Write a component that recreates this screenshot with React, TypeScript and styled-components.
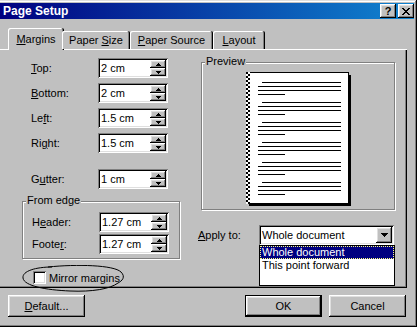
import styled, { createGlobalStyle, css } from "styled-components";

const GlobalStyle = createGlobalStyle`
  html, body {
    margin: 0;
    padding: 0;
    background: #ffffff;
  }
  body {
    font-family: "Liberation Sans", Arial, sans-serif;
    font-size: 11px;
    color: #000;
  }
`;

const raised = css`
  box-shadow: inset -1px -1px #000, inset 1px 1px #fff, inset -2px -2px #808080,
    inset 2px 2px #dfdfdf;
`;

const sunken = css`
  box-shadow: inset 1px 1px #808080, inset -1px -1px #fff, inset 2px 2px #000,
    inset -2px -2px #dfdfdf;
`;

function Arrow({ down }: { down?: boolean }) {
  return (
    <svg width="5" height="3" shapeRendering="crispEdges">
      <g transform={down ? "translate(0 3) scale(1 -1)" : undefined}>
        <rect x="2" y="0" width="1" height="1" fill="#000" />
        <rect x="1" y="1" width="3" height="1" fill="#000" />
        <rect x="0" y="2" width="5" height="1" fill="#000" />
      </g>
    </svg>
  );
}

function Spinner({ value }: { value: string }) {
  return (
    <SpinBox>
      <SpinText>{value}</SpinText>
      <SpinButtons>
        <SpinButton>
          <Arrow />
        </SpinButton>
        <SpinButton>
          <Arrow down />
        </SpinButton>
      </SpinButtons>
    </SpinBox>
  );
}

function PagePreview() {
  const groups = [0, 1, 2, 3, 4, 5];
  return (
    <svg width="105" height="134" shapeRendering="crispEdges">
      <defs>
        <pattern id="chk" width="4" height="4" patternUnits="userSpaceOnUse">
          <rect width="4" height="4" fill="#fff" />
          <rect width="2" height="2" fill="#000" />
          <rect x="2" y="2" width="2" height="2" fill="#000" />
        </pattern>
      </defs>
      <rect x="3" y="3" width="102" height="131" fill="#000" />
      <rect x="0" y="0" width="103" height="132" fill="#000" />
      <rect x="1" y="1" width="101" height="130" fill="#fff" />
      <rect x="0" y="0" width="4" height="132" fill="url(#chk)" />
      {groups.map((g) => {
        const y = 10 + g * 20;
        return (
          <g key={g} fill="#000">
            <rect x="16" y={y} width="79" height="1" />
            <rect x="12" y={y + 4} width="83" height="1" />
            <rect x="12" y={y + 8} width="83" height="1" />
            <rect x="12" y={y + 12} width="27" height="1" />
          </g>
        );
      })}
    </svg>
  );
}

function Ellipse() {
  return (
    <EllipseSvg width="104" height="28" viewBox="0 0 104 28">
      <path
        d="M26 2 C 55 -1, 92 0, 99 7 C 104 12, 100 16, 96 18 C 88 24, 70 27, 48 26 C 24 25, 2 21, 1 13 C 0 6, 14 2, 30 2"
        fill="none"
        stroke="#000"
        strokeWidth="1"
      />
    </EllipseSvg>
  );
}

export default function App() {
  return (
    <>
      <GlobalStyle />
      <Window>
        <TitleBar>
          <Title>Page Setup</Title>
          <CaptionButtons>
            <CaptionButton>
              <HelpGlyph>?</HelpGlyph>
            </CaptionButton>
            <CaptionButton>
              <svg width="8" height="7" shapeRendering="crispEdges">
                <path
                  d="M0 0h2v1h-2zM6 0h2v1h-2zM1 1h2v1h-2zM5 1h2v1h-2zM2 2h4v1h-4zM3 3h2v1h-2zM2 4h4v1h-4zM1 5h2v1h-2zM5 5h2v1h-2zM0 6h2v1h-2zM6 6h2v1h-2z"
                  fill="#000"
                />
              </svg>
            </CaptionButton>
          </CaptionButtons>
        </TitleBar>

        <TabRow>
          <Tab $w={56} $active>
            <Key>M</Key>argins
          </Tab>
          <Tab $w={68}>
            Paper <Key>S</Key>ize
          </Tab>
          <Tab $w={83}>
            <Key>P</Key>aper Source
          </Tab>
          <Tab $w={52}>
            <Key>L</Key>ayout
          </Tab>
        </TabRow>

        <Panel>
          <LeftColumn>
            <FieldList>
              <FieldRow>
                <FieldLabel>
                  <Key>T</Key>op:
                </FieldLabel>
                <Spinner value="2 cm" />
              </FieldRow>
              <FieldRow>
                <FieldLabel>
                  <Key>B</Key>ottom:
                </FieldLabel>
                <Spinner value="2 cm" />
              </FieldRow>
              <FieldRow>
                <FieldLabel>
                  Le<Key>f</Key>t:
                </FieldLabel>
                <Spinner value="1.5 cm" />
              </FieldRow>
              <FieldRow>
                <FieldLabel>
                  Ri<Key>g</Key>ht:
                </FieldLabel>
                <Spinner value="1.5 cm" />
              </FieldRow>
              <FieldRow $gapTop={11}>
                <FieldLabel>
                  G<Key>u</Key>tter:
                </FieldLabel>
                <Spinner value="1 cm" />
              </FieldRow>
            </FieldList>

            <EdgeGroup>
              <GroupLabel>From edge</GroupLabel>
              <FieldRow>
                <FieldLabel>
                  H<Key>e</Key>ader:
                </FieldLabel>
                <Spinner value="1.27 cm" />
              </FieldRow>
              <FieldRow $gapTop={2}>
                <FieldLabel>
                  Foote<Key>r</Key>:
                </FieldLabel>
                <Spinner value="1.27 cm" />
              </FieldRow>
            </EdgeGroup>

            <MirrorRow>
              <Ellipse />
              <CheckBox />
              <span>Mirror margins</span>
            </MirrorRow>
          </LeftColumn>

          <RightColumn>
            <PreviewGroup>
              <GroupLabel>Preview</GroupLabel>
              <PagePreview />
            </PreviewGroup>

            <ApplyRow>
              <ApplyLabel>
                <Key>A</Key>pply to:
              </ApplyLabel>
              <Combo>
                <ComboText>Whole document</ComboText>
                <DropButton>
                  <svg width="7" height="4" shapeRendering="crispEdges">
                    <path d="M0 0h7v1h-7zM1 1h5v1h-5zM2 2h3v1h-3zM3 3h1v1h-1z" fill="#000" />
                  </svg>
                </DropButton>
                <DropList>
                  <ListItem $selected>Whole document</ListItem>
                  <ListItem>This point forward</ListItem>
                </DropList>
              </Combo>
            </ApplyRow>
          </RightColumn>
        </Panel>

        <Footer>
          <Button>
            <Key>D</Key>efault...
          </Button>
          <FooterRight>
            <Button $default>OK</Button>
            <Button>Cancel</Button>
          </FooterRight>
        </Footer>
      </Window>
    </>
  );
}

const Window = styled.div`
  width: 417px;
  height: 327px;
  box-sizing: border-box;
  padding: 3px 3px 3px 0;
  background: #c0c0c0;
  box-shadow: inset -1px -1px #000, inset 0 1px #dfdfdf, inset -2px -2px #808080,
    inset 0 2px #fff;
  display: flex;
  flex-direction: column;
  overflow: hidden;
`;

const TitleBar = styled.div`
  height: 16px;
  display: flex;
  align-items: center;
  justify-content: space-between;
  padding-left: 3px;
  background: linear-gradient(to right, #000080, #1084d0);
`;

const Title = styled.span`
  color: #fff;
  font-weight: bold;
  font-size: 12px;
  line-height: 16px;
`;

const CaptionButtons = styled.div`
  display: flex;
  gap: 2px;
`;

const CaptionButton = styled.div`
  width: 16px;
  height: 14px;
  box-sizing: border-box;
  background: #c0c0c0;
  ${raised};
  display: flex;
  align-items: center;
  justify-content: center;
`;

const HelpGlyph = styled.span`
  font-weight: bold;
  font-size: 11px;
  line-height: 11px;
`;

const Key = styled.span`
  text-decoration: underline;
`;

const TabRow = styled.div`
  position: relative;
  z-index: 1;
  height: 21px;
  margin-top: 9px;
  padding-left: 10px;
  display: flex;
  align-items: flex-end;
`;

const Tab = styled.div<{ $w: number; $active?: boolean }>`
  width: ${(p) => p.$w}px;
  height: ${(p) => (p.$active ? 22 : 18)}px;
  margin: 0 ${(p) => (p.$active ? -2 : 0)}px ${(p) => (p.$active ? -1 : 0)}px;
  box-sizing: border-box;
  padding-top: ${(p) => (p.$active ? 5 : 3)}px;
  line-height: 13px;
  text-align: center;
  white-space: nowrap;
  background: #c0c0c0;
  border-radius: 2px 2px 0 0;
  box-shadow: inset -1px 0 #000, inset 1px 1px #fff, inset -2px 0 #808080;
`;

const Panel = styled.div`
  position: relative;
  width: 407px;
  height: 239px;
  box-sizing: border-box;
  padding-left: 22px;
  display: grid;
  grid-template-columns: 158px 197px;
  column-gap: 18px;
  box-shadow: inset 0 1px #fff, inset -1px -1px #000, inset -2px -2px #808080;
`;

const LeftColumn = styled.div`
  padding-top: 9px;
  display: flex;
  flex-direction: column;
`;

const FieldList = styled.div`
  display: flex;
  flex-direction: column;
  gap: 5px;
`;

const FieldRow = styled.div<{ $gapTop?: number }>`
  display: flex;
  align-items: center;
  height: 20px;
  padding-left: 9px;
  margin-top: ${(p) => p.$gapTop ?? 0}px;
`;

const FieldLabel = styled.span`
  width: 67px;
  white-space: nowrap;
`;

const SpinBox = styled.div`
  width: 70px;
  height: 20px;
  box-sizing: border-box;
  padding: 2px;
  background: #fff;
  ${sunken};
  display: flex;
`;

const SpinText = styled.span`
  flex: 1;
  padding-left: 1px;
  line-height: 16px;
`;

const SpinButtons = styled.div`
  width: 16px;
  display: flex;
  flex-direction: column;
`;

const SpinButton = styled.div`
  flex: 1;
  background: #c0c0c0;
  ${raised};
  display: flex;
  align-items: center;
  justify-content: center;
`;

const groupFrame = css`
  position: relative;
  box-sizing: border-box;
  border: 1px solid #808080;
  box-shadow: inset 1px 1px #fff, 1px 1px #fff;
`;

const GroupLabel = styled.span`
  position: absolute;
  top: -8px;
  left: 3px;
  padding: 0 1px;
  line-height: 13px;
  background: #c0c0c0;
`;

const EdgeGroup = styled.div`
  ${groupFrame};
  margin-top: 12px;
  width: 158px;
  padding: 10px 0 4px;
  display: flex;
  flex-direction: column;
`;

const MirrorRow = styled.div`
  position: relative;
  margin-top: 12px;
  padding-left: 11px;
  height: 13px;
  display: flex;
  align-items: center;
  gap: 3px;
`;

const EllipseSvg = styled.svg`
  position: absolute;
  left: 0;
  top: -6px;
`;

const CheckBox = styled.div`
  width: 13px;
  height: 13px;
  box-sizing: border-box;
  background: #fff;
  ${sunken};
`;

const RightColumn = styled.div`
  padding-top: 13px;
  display: flex;
  flex-direction: column;
`;

const PreviewGroup = styled.div`
  ${groupFrame};
  margin-left: 3px;
  width: 194px;
  height: 148px;
  padding-top: 9px;
  display: flex;
  justify-content: center;
  align-items: flex-start;
`;

const ApplyRow = styled.div`
  margin-top: 15px;
  display: flex;
  align-items: center;
`;

const ApplyLabel = styled.span`
  width: 61px;
`;

const Combo = styled.div`
  position: relative;
  width: 135px;
  height: 20px;
  box-sizing: border-box;
  padding: 2px;
  background: #fff;
  ${sunken};
  display: flex;
`;

const ComboText = styled.span`
  flex: 1;
  padding-left: 1px;
  line-height: 16px;
`;

const DropButton = styled.div`
  width: 16px;
  background: #c0c0c0;
  ${raised};
  display: flex;
  align-items: center;
  justify-content: center;
`;

const DropList = styled.div`
  position: absolute;
  top: 20px;
  left: 0;
  width: 136px;
  height: 41px;
  box-sizing: border-box;
  border: 1px solid #000;
  background: #fff;
  z-index: 2;
`;

const ListItem = styled.div<{ $selected?: boolean }>`
  height: 13px;
  line-height: 13px;
  padding-left: 2px;
  white-space: nowrap;
  background: ${(p) => (p.$selected ? "#000080" : "transparent")};
  color: ${(p) => (p.$selected ? "#fff" : "#000")};
  outline: ${(p) => (p.$selected ? "1px dotted #ffff7f" : "none")};
  outline-offset: -1px;
`;

const Footer = styled.div`
  margin-top: 7px;
  padding: 0 8px;
  display: flex;
  justify-content: space-between;
`;

const FooterRight = styled.div`
  display: flex;
  gap: 7px;
`;

const Button = styled.div<{ $default?: boolean }>`
  width: 77px;
  height: 22px;
  box-sizing: border-box;
  display: flex;
  align-items: center;
  justify-content: center;
  background: #c0c0c0;
  ${(p) =>
    p.$default
      ? css`
          box-shadow: inset 0 0 0 1px #000, inset -2px -2px #000, inset 2px 2px #fff,
            inset -3px -3px #808080, inset 3px 3px #dfdfdf;
        `
      : raised};
`;
